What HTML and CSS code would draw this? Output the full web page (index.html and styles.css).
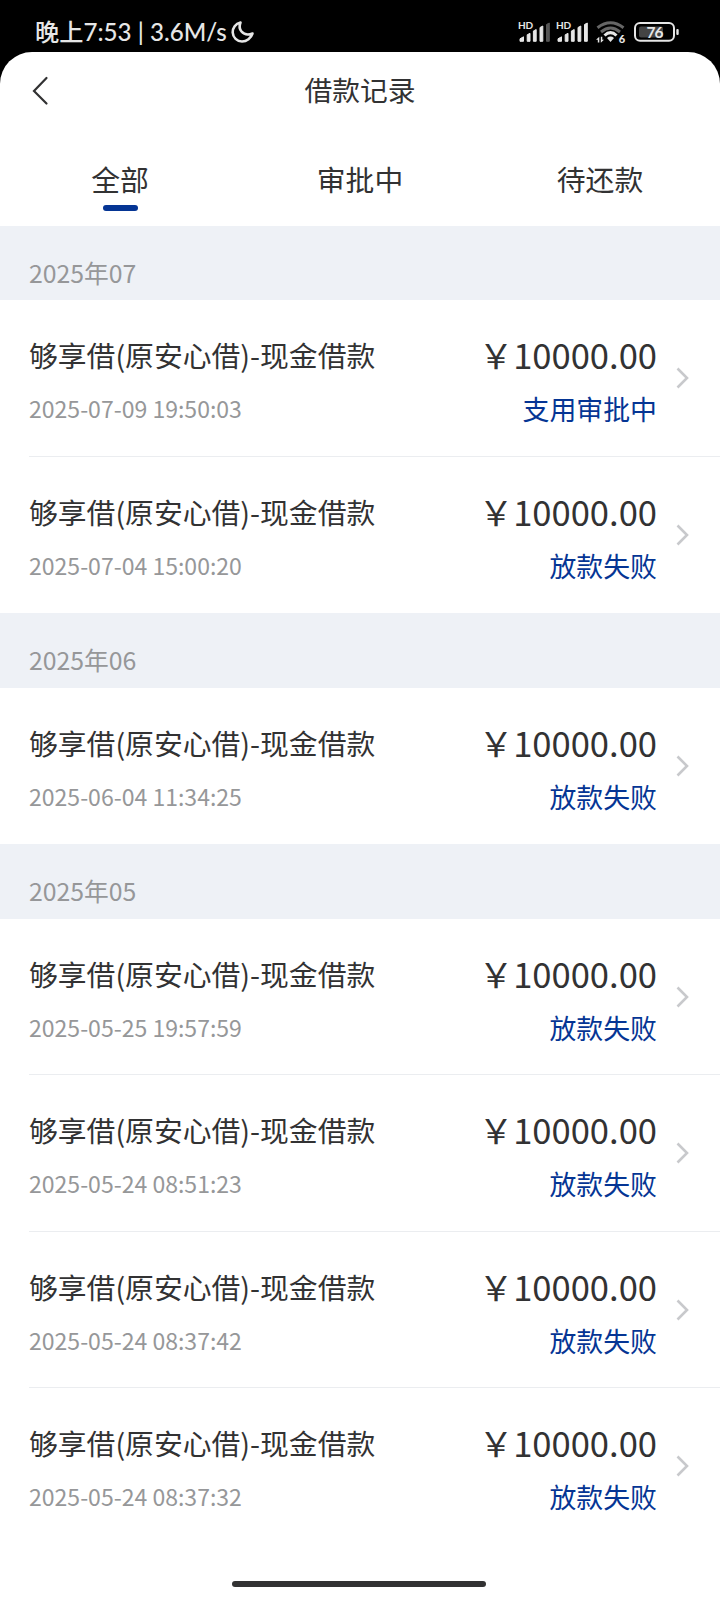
FILE: index.html
```html
<!DOCTYPE html>
<html lang="zh-CN">
<head>
    <meta charset="UTF-8">
    <meta name="viewport" content="width=device-width, initial-scale=1.0">
    <title>借款记录</title>
    <link rel="stylesheet" href="styles.css">
</head>
<body>
    <div class="status-bar">
        <div class="status-left">
            <span class="clock">晚上7:53 | 3.6M/s</span>
            <svg class="moon" width="24" height="24" viewBox="0 0 24 24">
                <path d="M9.500 2.500C4.500 3.500 1.500 8 1.700 12.500c.3 5 4.300 9 9.300 9 4.800 0 9-3.500 10.500-8-4 1.500-8.500 1-11-2C8.300 9 8.300 5.500 9.500 2.500z"/>
            </svg>
        </div>
        <div class="status-right">
            <svg class="signal" width="34" height="24" viewBox="0 0 34 24">
                <text class="hd" x="0" y="8.800" textLength="15">HD</text>
                <path d="M2 21.300v-2.500l3.500-2v4.500zM9.200 21.300v-6.500l2.800-1.500v8zM15.400 21.300V11l2.800-1.500v11.800zM22 21.300V7.500L24.800 6v15.300z"/>
                <path class="dim" d="M28.500 21.300V4.500L31.300 3v18.300z"/>
            </svg>
            <svg class="signal" width="34" height="24" viewBox="0 0 34 24">
                <text class="hd" x="0" y="8.800" textLength="15">HD</text>
                <path d="M2 21.300v-2.500l3.500-2v4.500zM9.200 21.300v-6.500l2.800-1.500v8zM15.400 21.300V11l2.800-1.500v11.800zM22 21.300V7.500L24.800 6v15.300zM28.500 21.300V4.500L31.300 3v18.300z"/>
            </svg>
            <svg class="wifi" width="30" height="24" viewBox="0 0 30 24">
                <path class="wave dim-wave" d="M1.500 7.800Q14.500 -2.200 27.500 7.800M5 12Q14.500 4 24 12"/>
                <path class="wave" d="M8.500 15.500Q14.500 9.700 20.500 15.500"/>
                <path class="fill" d="M11 18Q14.500 15.200 18 18L14.500 22z"/>
                <path class="fill" d="M0 19.800L3.300 16.800V22.500H1.800v-2.700zM4.800 16.800H6.300v2.900H8L4.800 22.700z"/>
                <text class="gen" x="22.800" y="23">6</text>
            </svg>
            <svg class="battery" width="45" height="24" viewBox="0 0 45 24">
                <rect class="case" x="1" y="3" width="39" height="17.800" rx="5"/>
                <rect class="charge" x="5" y="6.500" width="24" height="11" rx="2"/>
                <rect class="fill" x="42.300" y="9" width="2.400" height="6" rx="1"/>
                <text class="level" x="20.500" y="17.500">76</text>
            </svg>
        </div>
    </div>

    <div class="page">
        <div class="navbar">
            <svg class="back" width="17" height="30" viewBox="0 0 17 30">
                <path d="M14.500 2L2 15l12.500 12.500"/>
            </svg>
            <h1>借款记录</h1>
        </div>

        <div class="tabs">
            <div class="tab active">全部</div>
            <div class="tab">审批中</div>
            <div class="tab">待还款</div>
        </div>

        <div id="records"></div>
        <div class="home-bar"></div>
    </div>

    <script>
        const groups = [
            { month: '2025年07', items: [
                { time: '2025-07-09 19:50:03', status: '支用审批中' },
                { time: '2025-07-04 15:00:20', status: '放款失败' }
            ] },
            { month: '2025年06', items: [
                { time: '2025-06-04 11:34:25', status: '放款失败' }
            ] },
            { month: '2025年05', items: [
                { time: '2025-05-25 19:57:59', status: '放款失败' },
                { time: '2025-05-24 08:51:23', status: '放款失败' },
                { time: '2025-05-24 08:37:42', status: '放款失败' },
                { time: '2025-05-24 08:37:32', status: '放款失败' }
            ] }
        ];

        // Build one row of the list
        function renderItem(item) {
            return `
                <div class="record">
                    <div class="info">
                        <div class="name">够享借(原安心借)-现金借款</div>
                        <div class="time">${item.time}</div>
                    </div>
                    <div class="result">
                        <div class="amount">￥10000.00</div>
                        <div class="status">${item.status}</div>
                    </div>
                    <svg class="arrow" width="13" height="22" viewBox="0 0 13 22">
                        <path d="M1.500 1.500l9.500 9.500-9.500 9.500"/>
                    </svg>
                </div>`;
        }

        document.getElementById('records').innerHTML = groups.map(group => `
            <div class="month">${group.month}</div>
            <div class="group">${group.items.map(renderItem).join('')}</div>
        `).join('');
    </script>
</body>
</html>
```
FILE: styles.css
```css
* {
    box-sizing: border-box;
}

body {
    font-family: "Noto Sans CJK SC", "Noto Sans", sans-serif;
    background-color: #000;
    color: #323233;
    margin: 0;
}

.status-bar {
    display: flex;
    justify-content: space-between;
    height: 52px;
    padding: 0 41px 0 35px;
    color: #e6e6e6;
}

.status-left, .status-right {
    display: flex;
    align-items: center;
    padding-top: 11px;
}

.clock {
    font-family: Lato, "Noto Sans CJK SC", sans-serif;
    font-size: 24.2px;
    font-weight: 500;
    line-height: 32px;
    white-space: nowrap;
}

.moon {
    margin-left: 4px;
    fill: none;
    stroke: #e6e6e6;
    stroke-width: 2.6;
    stroke-linejoin: round;
}

.signal {
    margin-right: 4px;
    fill: #e6e6e6;
}

.signal path {
    stroke: #e6e6e6;
    stroke-width: 1;
    stroke-linejoin: round;
}

.signal .dim {
    fill: #555;
    stroke: #555;
}

.hd {
    font-family: Lato, sans-serif;
    font-size: 10px;
    font-weight: bold;
}

.wifi {
    margin: 0 8px 0 2px;
}

.wave {
    fill: none;
    stroke: #e6e6e6;
    stroke-width: 3;
}

.dim-wave {
    stroke: #666;
}

.fill, .gen, .level {
    fill: #e6e6e6;
}

.gen {
    font-family: Lato, sans-serif;
    font-size: 11px;
    font-weight: 900;
}

.case {
    fill: none;
    stroke: #e6e6e6;
    stroke-width: 2;
}

.charge {
    fill: #444;
}

.level {
    font-family: Lato, sans-serif;
    font-size: 15.5px;
    font-weight: bold;
    text-anchor: middle;
    letter-spacing: -1px;
}

.page {
    height: 1548px;
    background: #fff;
    border-radius: 32px 32px 0 0;
    overflow: hidden;
}

.navbar {
    display: grid;
    grid-template-columns: 80px 1fr 80px;
    align-items: center;
    height: 77px;
}

.back {
    margin-left: 32px;
    fill: none;
    stroke: #323233;
    stroke-width: 2.2;
    stroke-linecap: round;
}

h1 {
    margin: 0;
    padding-bottom: 3px;
    text-align: center;
    font-size: 27.8px;
    font-weight: 400;
    line-height: 40px;
}

.tabs {
    display: flex;
    height: 96.6px;
}

.tab {
    flex: 1;
    display: flex;
    flex-direction: column;
    align-items: center;
    padding-top: 29px;
    font-size: 28.8px;
    line-height: 42px;
}

.active::after {
    content: "";
    width: 35px;
    height: 6px;
    margin-top: 4.5px;
    border-radius: 3px;
    background: #053594;
}

.month {
    height: 74.9px;
    padding: 26px 29px 0;
    background: #eef1f6;
    color: #969799;
    font-size: 24.8px;
    line-height: 40px;
}

.group {
    padding-left: 29px;
}

.record {
    display: flex;
    height: 156.3px;
    padding: 34px 31px 0 0;
    border-bottom: 1px solid #ebedf0;
}

.record:last-child {
    border-bottom: 0;
}

.info {
    flex: 1;
}

.name {
    font-size: 28.8px;
    line-height: 42px;
}

.time {
    margin-top: 14px;
    color: #969799;
    font-size: 23.04px;
    line-height: 36px;
}

.result {
    text-align: right;
}

.amount {
    margin-top: -1px;
    font-size: 34.56px;
    line-height: 42px;
}

.status {
    margin-top: 14px;
    color: #053594;
    font-size: 26.88px;
    line-height: 40px;
}

.arrow {
    margin: 33px 0 0 19px;
    fill: none;
    stroke: #c8c9cc;
    stroke-width: 2.6;
}

.home-bar {
    width: 254px;
    height: 6px;
    margin: 37px 0 0 231.5px;
    border-radius: 3px;
    background: #323233;
}
```
